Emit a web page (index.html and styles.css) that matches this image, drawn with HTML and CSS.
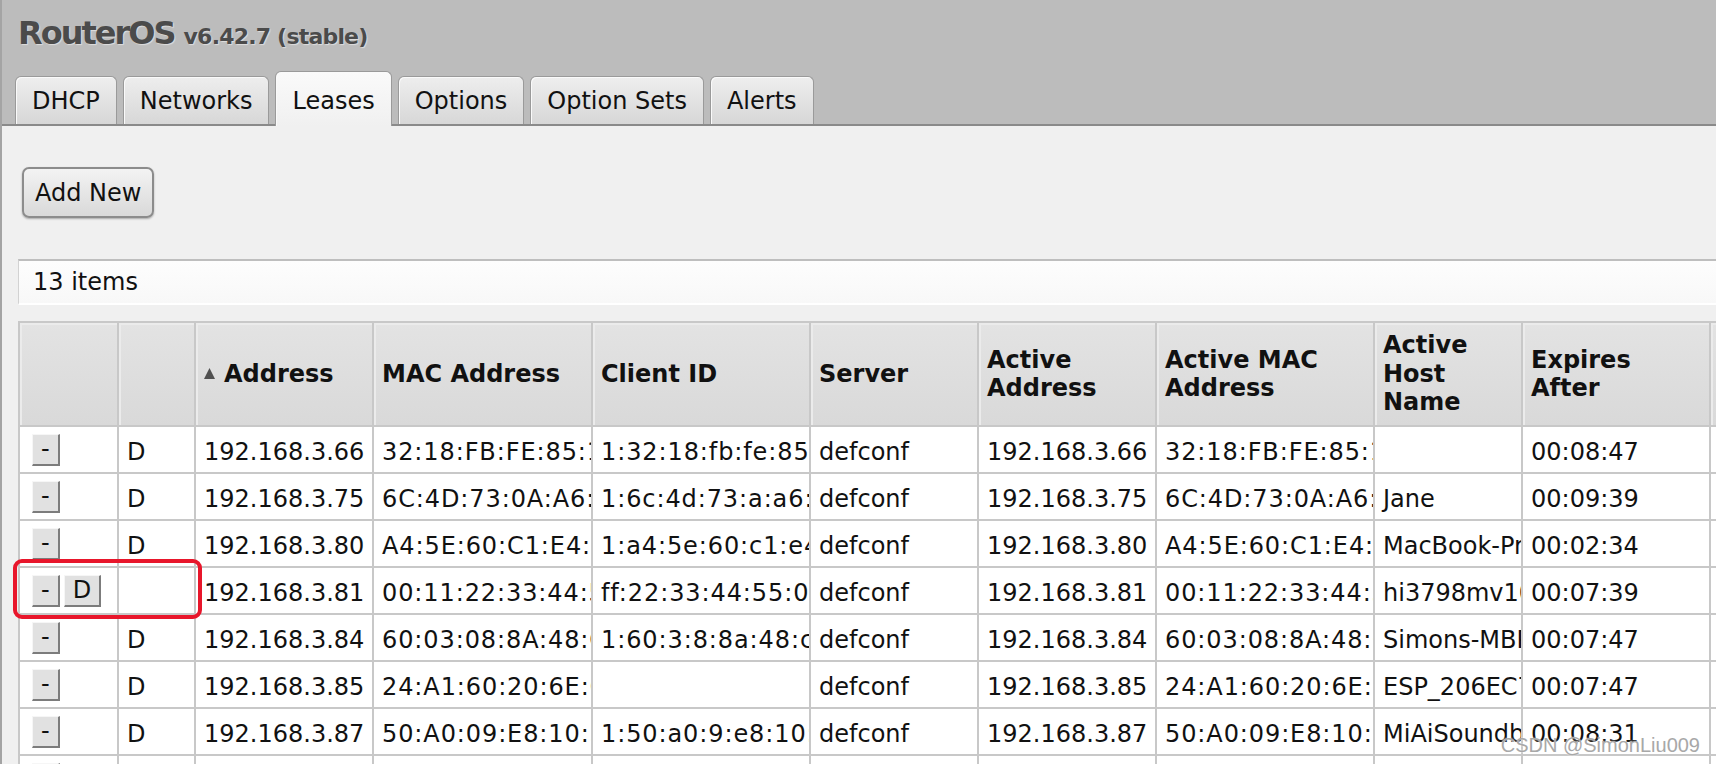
FILE: index.html
```html
<!DOCTYPE html>
<html lang="en">
    <head>
        <meta charset="UTF-8">
        <title>RouterOS - DHCP Leases</title>
        <link rel="stylesheet" href="styles.css">
    </head>

    <body>
        <div class="top">
            <h1 class="brand">RouterOS <span class="ver">v6.42.7 (stable)</span></h1>
            <div class="tabs">
                <div class="tab">DHCP</div>
                <div class="tab">Networks</div>
                <div class="tab active">Leases</div>
                <div class="tab">Options</div>
                <div class="tab">Option Sets</div>
                <div class="tab">Alerts</div>
            </div>
        </div>

        <div class="content">
            <button class="add-btn">Add New</button>
            <div class="count-bar">13 items</div>

            <div class="grid">
                <div class="row head">
                    <div class="cell"></div>
                    <div class="cell"></div>
                    <div class="cell"><svg class="sort" width="11" height="11" viewBox="0 0 11 11"><path d="M5.5 0 L11 11 L0 11 Z" fill="#505050"/></svg>Address</div>
                    <div class="cell">MAC Address</div>
                    <div class="cell">Client ID</div>
                    <div class="cell">Server</div>
                    <div class="cell">Active Address</div>
                    <div class="cell">Active MAC Address</div>
                    <div class="cell">Active Host Name</div>
                    <div class="cell">Expires After</div>
                    <div class="cell">Status</div>
                </div>

                <div class="row">
                    <div class="cell act"><button class="mini">-</button></div>
                    <div class="cell">D</div>
                    <div class="cell">192.168.3.66</div>
                    <div class="cell mac">32:18:FB:FE:85:1A</div>
                    <div class="cell mac">1:32:18:fb:fe:85:1a</div>
                    <div class="cell">defconf</div>
                    <div class="cell">192.168.3.66</div>
                    <div class="cell mac">32:18:FB:FE:85:1A</div>
                    <div class="cell"></div>
                    <div class="cell">00:08:47</div>
                    <div class="cell">bound</div>
                </div>
                <div class="row">
                    <div class="cell act"><button class="mini">-</button></div>
                    <div class="cell">D</div>
                    <div class="cell">192.168.3.75</div>
                    <div class="cell mac">6C:4D:73:0A:A6:3E</div>
                    <div class="cell mac">1:6c:4d:73:a:a6:3e</div>
                    <div class="cell">defconf</div>
                    <div class="cell">192.168.3.75</div>
                    <div class="cell mac">6C:4D:73:0A:A6:3E</div>
                    <div class="cell">Jane</div>
                    <div class="cell">00:09:39</div>
                    <div class="cell">bound</div>
                </div>
                <div class="row">
                    <div class="cell act"><button class="mini">-</button></div>
                    <div class="cell">D</div>
                    <div class="cell">192.168.3.80</div>
                    <div class="cell mac">A4:5E:60:C1:E4:7B</div>
                    <div class="cell mac">1:a4:5e:60:c1:e4:7b</div>
                    <div class="cell">defconf</div>
                    <div class="cell">192.168.3.80</div>
                    <div class="cell mac">A4:5E:60:C1:E4:7B</div>
                    <div class="cell">MacBook-Pro</div>
                    <div class="cell">00:02:34</div>
                    <div class="cell">bound</div>
                </div>
                <div class="row">
                    <div class="cell act"><button class="mini">-</button><button class="mini">D</button></div>
                    <div class="cell"></div>
                    <div class="cell">192.168.3.81</div>
                    <div class="cell mac">00:11:22:33:44:55</div>
                    <div class="cell mac">ff:22:33:44:55:00:01:00</div>
                    <div class="cell">defconf</div>
                    <div class="cell">192.168.3.81</div>
                    <div class="cell mac">00:11:22:33:44:55</div>
                    <div class="cell">hi3798mv100</div>
                    <div class="cell">00:07:39</div>
                    <div class="cell">bound</div>
                </div>
                <div class="row">
                    <div class="cell act"><button class="mini">-</button></div>
                    <div class="cell">D</div>
                    <div class="cell">192.168.3.84</div>
                    <div class="cell mac">60:03:08:8A:48:C2</div>
                    <div class="cell mac">1:60:3:8:8a:48:c2</div>
                    <div class="cell">defconf</div>
                    <div class="cell">192.168.3.84</div>
                    <div class="cell mac">60:03:08:8A:48:C2</div>
                    <div class="cell">Simons-MBP</div>
                    <div class="cell">00:07:47</div>
                    <div class="cell">bound</div>
                </div>
                <div class="row">
                    <div class="cell act"><button class="mini">-</button></div>
                    <div class="cell">D</div>
                    <div class="cell">192.168.3.85</div>
                    <div class="cell mac">24:A1:60:20:6E:C7</div>
                    <div class="cell mac"></div>
                    <div class="cell">defconf</div>
                    <div class="cell">192.168.3.85</div>
                    <div class="cell mac">24:A1:60:20:6E:C7</div>
                    <div class="cell">ESP_206EC7</div>
                    <div class="cell">00:07:47</div>
                    <div class="cell">bound</div>
                </div>
                <div class="row">
                    <div class="cell act"><button class="mini">-</button></div>
                    <div class="cell">D</div>
                    <div class="cell">192.168.3.87</div>
                    <div class="cell mac">50:A0:09:E8:10:5D</div>
                    <div class="cell mac">1:50:a0:9:e8:10:5d</div>
                    <div class="cell">defconf</div>
                    <div class="cell">192.168.3.87</div>
                    <div class="cell mac">50:A0:09:E8:10:5D</div>
                    <div class="cell">MiAiSoundbox</div>
                    <div class="cell">00:08:31</div>
                    <div class="cell">bound</div>
                </div>
                <div class="row">
                    <div class="cell act"><button class="mini">-</button></div>
                    <div class="cell">D</div>
                    <div class="cell">192.168.3.90</div>
                    <div class="cell mac">B8:27:EB:12:9C:04</div>
                    <div class="cell mac">1:b8:27:eb:12:9c:4</div>
                    <div class="cell">defconf</div>
                    <div class="cell">192.168.3.90</div>
                    <div class="cell mac">B8:27:EB:12:9C:04</div>
                    <div class="cell">raspberrypi</div>
                    <div class="cell">00:05:12</div>
                    <div class="cell">bound</div>
                </div>
                <div class="row">
                    <div class="cell act"><button class="mini">-</button></div>
                    <div class="cell">D</div>
                    <div class="cell">192.168.3.93</div>
                    <div class="cell mac">F0:18:98:4A:2B:61</div>
                    <div class="cell mac">1:f0:18:98:4a:2b:61</div>
                    <div class="cell">defconf</div>
                    <div class="cell">192.168.3.93</div>
                    <div class="cell mac">F0:18:98:4A:2B:61</div>
                    <div class="cell">iPad</div>
                    <div class="cell">00:09:02</div>
                    <div class="cell">bound</div>
                </div>
            </div>
        </div>

        <div class="mark"></div>
        <div class="watermark">CSDN @SimonLiu009</div>
    </body>
</html>
```

FILE: styles.css
```css
* {
    padding: 0;
    margin: 0;
    box-sizing: border-box;
}

html, body {
    height: 100%;
    overflow: hidden;
}

body {
    position: relative;
    background: #f0f0f0;
    border-left: 2px solid #a4a4a4;
    font-family: "DejaVu Sans", Verdana, sans-serif;
    font-size: 24px;
    color: #111;
}

/* header with title and tabs */

.top {
    background: #bcbcbc;
}

.brand {
    padding: 15px 0 0 16px;
    height: 52px;
    line-height: 37px;
    font-size: 32px;
    font-weight: bold;
    letter-spacing: -2px;
    color: #4b4b4b;
    text-shadow: 1px 1px 1px #dedede;
    white-space: nowrap;
}

.brand .ver {
    font-size: 22px;
    letter-spacing: -0.8px;
}

.tabs {
    display: flex;
    align-items: flex-end;
    gap: 6px;
    margin-top: 19px;
    padding-left: 13px;
    border-bottom: 2px solid #8a8a8a;
}

.tab {
    display: flex;
    align-items: center;
    height: 48px;
    padding: 0 16px;
    border: 1px solid #9a9a9a;
    border-bottom: none;
    border-radius: 6px 6px 0 0;
    background: linear-gradient(#eeeeee, #d7d7d7);
    box-shadow: inset 1px 1px 0 #fafafa;
    white-space: nowrap;
}

.tab.active {
    height: 55px;
    padding-top: 5px;
    padding-bottom: 2px;
    margin-bottom: -2px;
    background: linear-gradient(#fafafa, #f0f0f0);
}

/* content area */

.content {
    padding-left: 16px;
}

.add-btn {
    display: block;
    margin: 41px 0 0 4px;
    height: 51px;
    padding: 0 11px;
    font-family: inherit;
    font-size: 24px;
    color: #111;
    border: 2px solid #8c8c8c;
    border-radius: 7px;
    background: linear-gradient(#f3f3f3, #d9d9d9);
    box-shadow: 0 1px 2px rgba(0, 0, 0, 0.3);
}

.count-bar {
    margin-top: 41px;
    height: 46px;
    padding: 7px 0 0 14px;
    line-height: 28px;
    border-top: 2px solid #bebebe;
    border-left: 1px solid #d2d2d2;
    border-bottom: 2px solid #ffffff;
    background: linear-gradient(#fdfdfd, #f8f8f8);
}

/* leases table */

.grid {
    width: max-content;
    margin-top: 16px;
    border-top: 2px solid #c8c8c8;
    border-left: 2px solid #c8c8c8;
    background: #fff;
}

.row {
    display: grid;
    grid-template-columns: 99px 77px 178px 219px 218px 168px 178px 218px 148px 188px 160px;
}

.cell {
    height: 47px;
    padding: 6px 0 0 8px;
    line-height: 39px;
    border-right: 2px solid #c8c8c8;
    border-bottom: 2px solid #c8c8c8;
    white-space: nowrap;
    overflow: hidden;
}

/* verdana colons are wider than dejavu ones */
.cell.mac {
    letter-spacing: 0.9px;
}

.head .cell {
    display: flex;
    align-items: center;
    height: 104px;
    padding: 0 8px;
    line-height: 28.5px;
    font-weight: bold;
    white-space: normal;
    background: linear-gradient(#e3e3e3, #d9d9d9);
    box-shadow: inset 2px 2px 0 #ebebeb;
}

.sort {
    flex: none;
    margin: 0 9px 2px 0;
}

.cell.act {
    display: flex;
    align-items: center;
    gap: 4px;
    padding: 0 0 0 12px;
}

.mini {
    height: 32px;
    padding: 0 8px;
    line-height: 29px;
    font-family: inherit;
    font-size: 24px;
    color: #111;
    background: #e1e1e1;
    border: 1px solid #f6f6f6;
    border-right: 2px solid #7c7c7c;
    border-bottom: 2px solid #7c7c7c;
}

/* overlays on the screenshot */

.mark {
    position: absolute;
    left: 11px;
    top: 559px;
    width: 189px;
    height: 60px;
    border: 4px solid #e8162b;
    border-radius: 9px;
}

.watermark {
    position: absolute;
    right: 16px;
    top: 734px;
    font-family: "Liberation Sans", Arial, sans-serif;
    font-size: 20px;
    color: #a8a8a8;
    text-shadow: 0 0 2px #fff;
}
```
